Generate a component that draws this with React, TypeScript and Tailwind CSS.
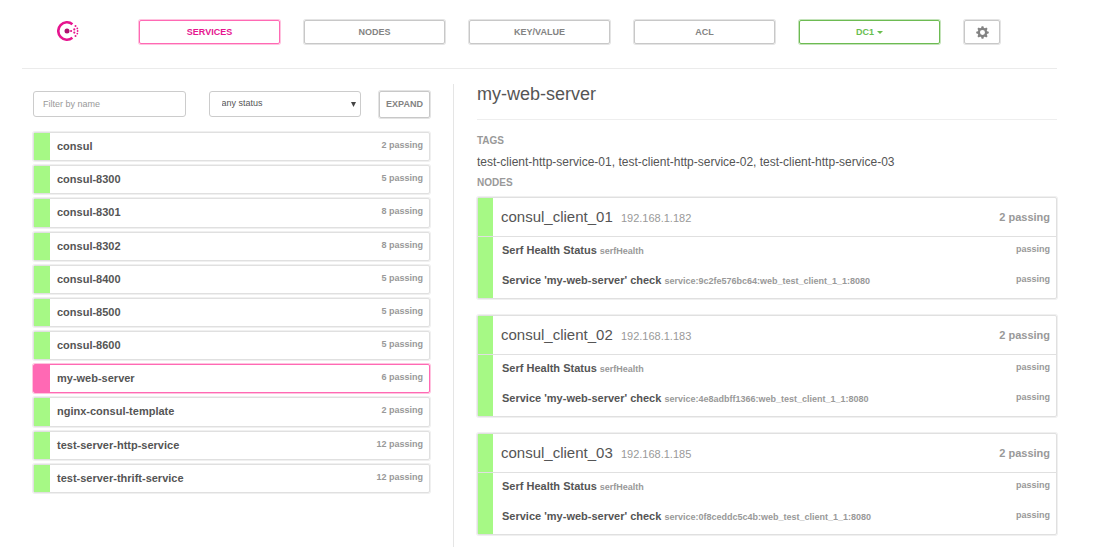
import React from "react";

const tabs = ["SERVICES", "NODES", "KEY/VALUE", "ACL"];

const services = [
  { name: "consul", status: "2 passing" },
  { name: "consul-8300", status: "5 passing" },
  { name: "consul-8301", status: "8 passing" },
  { name: "consul-8302", status: "8 passing" },
  { name: "consul-8400", status: "5 passing" },
  { name: "consul-8500", status: "5 passing" },
  { name: "consul-8600", status: "5 passing" },
  { name: "my-web-server", status: "6 passing", active: true },
  { name: "nginx-consul-template", status: "2 passing" },
  { name: "test-server-http-service", status: "12 passing" },
  { name: "test-server-thrift-service", status: "12 passing" },
];

const nodes = [
  { name: "consul_client_01", ip: "192.168.1.182", id: "service:9c2fe576bc64:web_test_client_1_1:8080" },
  { name: "consul_client_02", ip: "192.168.1.183", id: "service:4e8adbff1366:web_test_client_1_1:8080" },
  { name: "consul_client_03", ip: "192.168.1.185", id: "service:0f8ceddc5c4b:web_test_client_1_1:8080" },
];

function Logo() {
  return (
    <svg viewBox="0 0 22 22" className="h-[22px] w-[22px]" role="img" aria-label="Consul">
      <path d="M15.4 3.2A8.7 8.7 0 1 0 15.4 16.8" fill="none" stroke="#e6158f" strokeWidth="2.6" />
      <circle cx="10" cy="10" r="2.5" fill="#b01070" />
      <g fill="#e6158f">
        <circle cx="14.1" cy="10" r="1.1" />
        <circle cx="17.3" cy="8.4" r="1.1" />
        <circle cx="17.3" cy="11.6" r="1.1" />
        <circle cx="20.3" cy="7.4" r="0.9" />
        <circle cx="20.6" cy="10" r="0.9" />
        <circle cx="20.3" cy="12.6" r="0.9" />
        <circle cx="18.5" cy="4.9" r="1" />
        <circle cx="18.5" cy="15.1" r="1" />
      </g>
    </svg>
  );
}

function Gear() {
  return (
    <svg viewBox="0 0 24 24" className="h-[13px] w-[13px]" aria-hidden="true">
      <g fill="#838383">
        <path
          fillRule="evenodd"
          d="M12 3.2a8.8 8.8 0 1 0 0 17.6 8.8 8.8 0 0 0 0-17.6Zm0 4.2a4.6 4.6 0 1 1 0 9.2 4.6 4.6 0 0 1 0-9.2Z"
        />
        {[0, 45, 90, 135, 180, 225, 270, 315].map((a) => (
          <path key={a} d="M9 5 10.4 0.4h3.2L15 5Z" transform={`rotate(${a} 12 12)`} />
        ))}
      </g>
    </svg>
  );
}

export default function App() {
  return (
    <div className="flex min-h-screen flex-col bg-white pr-[41px] pl-[22px] font-['Liberation_Sans',Arial,sans-serif] text-[#555]">
      <header className="flex items-center border-b border-[#ebebeb] pt-5 pr-[57px] pb-6 pl-[35px]">
        <a href="#home" className="mr-[60px] block">
          <Logo />
        </a>
        <nav className="flex flex-1 gap-6 text-[9px] leading-3 font-bold">
          {tabs.map((t, i) => (
            <a
              key={t}
              href={"#" + t.toLowerCase()}
              className={
                "flex h-6 flex-1 items-center justify-center rounded-[2px] border " +
                (i === 0
                  ? "border-[#ff69b4] text-[#e6158f] shadow-[0_0_0_1px_#ffc3df]"
                  : "border-[#c8c8c8] text-[#838383] shadow-[0_0_0_1px_#e4e4e4]")
              }
            >
              {t}
            </a>
          ))}
          <button className="flex h-6 flex-1 items-center justify-center gap-[3px] rounded-[2px] border border-[#6dbb52] font-bold text-[#69be4f] shadow-[0_0_0_1px_#c4e3ba]">
            DC1
            <svg viewBox="0 0 6 3" className="h-[3px] w-[6px]" aria-hidden="true">
              <path d="M0 0h6L3 3Z" fill="currentColor" />
            </svg>
          </button>
          <button
            aria-label="Settings"
            className="flex h-6 w-9 items-center justify-center rounded-[2px] border border-[#c8c8c8] shadow-[0_0_0_1px_#e4e4e4]"
          >
            <Gear />
          </button>
        </nav>
      </header>

      <main className="flex flex-1 pt-[15px]">
        <section className="w-[432px] shrink-0 border-r border-[#e5e5e5] pt-[7px] pr-[23px] pl-[11px]">
          <form className="flex items-start text-[9px]">
            <div className="mr-[23px] min-w-0 flex-1">
              <input
                aria-label="Filter by name"
                placeholder="Filter by name"
                className="block h-[26px] w-full rounded-[3px] border border-[#ccc] px-[9px] placeholder:text-[#999]"
              />
            </div>
            <div className="relative mr-[18px] min-w-0 flex-1">
              <select
                aria-label="Status"
                className="block h-[26px] w-full appearance-none rounded-[3px] border border-[#ccc] bg-white px-3 text-[#555]"
              >
                <option>any status</option>
                <option>passing</option>
                <option>failing</option>
              </select>
              <svg viewBox="0 0 5 5" className="pointer-events-none absolute top-[11px] right-[5px] h-[5px] w-[5px]" aria-hidden="true">
                <path d="M0 0h5L2.5 5Z" fill="#444" />
              </svg>
            </div>
            <button
              type="button"
              className="h-[27px] w-[51px] rounded-[2px] border border-[#c8c8c8] font-bold text-[#838383] shadow-[0_0_0_1px_#e4e4e4]"
            >
              EXPAND
            </button>
          </form>

          <ul className="mt-[14px] grid min-h-[361px] auto-rows-fr gap-1">
            {services.map((s) => (
              <li key={s.name}>
                <a
                  href={"#" + s.name}
                  className={
                    "flex h-full rounded-[2px] border " +
                    (s.active
                      ? "border-[#ff69b4] shadow-[0_0_0_1px_#ffc3df]"
                      : "border-[#e0e0e0] shadow-[0_0_0_1px_#f0f0f0]")
                  }
                >
                  <span className={"w-4 " + (s.active ? "bg-[#ff69b4]" : "bg-[#a6f985]")} />
                  <span className="flex-1 pl-[7px] text-[11px] leading-[26px] font-bold">{s.name}</span>
                  <span className="pr-[6px] text-[9px] leading-6 font-bold text-[#999]">{s.status}</span>
                </a>
              </li>
            ))}
          </ul>
        </section>

        <section className="min-w-0 flex-1 pl-[23px]">
          <h1 className="border-b border-[#eee] pb-[14px] text-[18px] leading-[21px]">my-web-server</h1>
          <h2 className="mt-[14px] text-[10px] leading-[14px] font-bold text-[#999]">TAGS</h2>
          <p className="mt-[6px] text-[12px] leading-4">
            test-client-http-service-01, test-client-http-service-02, test-client-http-service-03
          </p>
          <h2 className="mt-[6px] text-[10px] leading-[14px] font-bold text-[#999]">NODES</h2>

          <div className="mt-[7px] flex flex-col gap-4">
            {nodes.map((n) => (
              <article key={n.name} className="rounded-[2px] border border-[#e0e0e0] shadow-[0_0_0_1px_#f0f0f0]">
                <div className="flex h-[39px] border-b border-[#e0e0e0]">
                  <span className="w-[15px] bg-[#a6f985]" />
                  <h3 className="flex-1 pl-2 text-[15px] leading-[38px]">
                    {n.name} <small className="ml-1 text-[11px] text-[#999]">{n.ip}</small>
                  </h3>
                  <span className="pr-[6px] text-[11px] leading-[38px] font-bold text-[#999]">2 passing</span>
                </div>
                <div className="flex h-[61px] text-[11px] font-bold">
                  <span className="w-[15px] bg-[#a6f985]" />
                  <ul className="flex-1 pr-[6px] pl-[9px]">
                    <li className="flex h-[30px] justify-between leading-[26px]">
                      <span>
                        Serf Health Status <small className="text-[9px] text-[#999]">serfHealth</small>
                      </span>
                      <span className="text-[9px] leading-6 text-[#999]">passing</span>
                    </li>
                    <li className="flex h-[30px] justify-between leading-[26px]">
                      <span>
                        Service 'my-web-server' check <small className="text-[9px] text-[#999]">{n.id}</small>
                      </span>
                      <span className="text-[9px] leading-6 text-[#999]">passing</span>
                    </li>
                  </ul>
                </div>
              </article>
            ))}
          </div>
        </section>
      </main>
    </div>
  );
}
